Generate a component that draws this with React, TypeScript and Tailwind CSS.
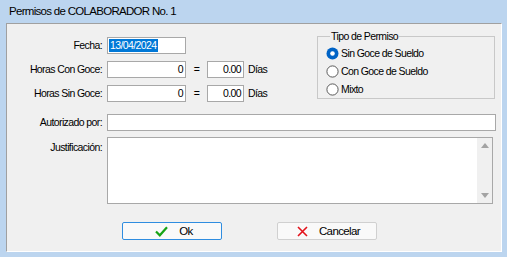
import React from 'react';

const font = { fontFamily: '"Liberation Sans", Arial, sans-serif' };

const TextBox: React.FC<{ width: string; value?: string; align?: 'left' | 'right' }> = ({ width, value, align }) => (
  <div
    className={`${width} h-[17px] bg-white border border-[#a8a8a8] flex items-center px-[2px] ${
      align === 'right' ? 'justify-end' : ''
    }`}
  >
    {value}
  </div>
);

const Radio: React.FC<{ checked?: boolean; label: string }> = ({ checked, label }) => (
  <div className="h-[18px] flex items-center gap-[2px]">
    <svg width="13" height="13" viewBox="0 0 13 13">
      {checked ? (
        <>
          <circle cx="6.5" cy="6.5" r="6" fill="#0063c6" />
          <circle cx="6.5" cy="6.5" r="2.3" fill="#ffffff" />
        </>
      ) : (
        <circle cx="6.5" cy="6.5" r="5.6" fill="#ffffff" stroke="#4a4a4a" strokeWidth="0.9" />
      )}
    </svg>
    <span>{label}</span>
  </div>
);

export default function App() {
  return (
    <div className="w-[507px] h-[257px] bg-[#bcd5ef] flex flex-col text-black" style={font}>
      <div className="h-[23px] pl-[9px] flex items-center text-[11.5px] tracking-[-0.7px]">Permisos de COLABORADOR No. 1</div>
      <div className="flex-1 ml-[6px] mr-[5px] mb-[5px] bg-[#f0f0f0] border-t border-l border-[#a0a0a0] border-r-white border-b-white border-r border-b text-[10.5px] leading-[13px] tracking-[-0.6px]">
        <div className="flex">
          <div className="w-[310px] pt-[13px] flex flex-col gap-[7px]">
            <div className="flex items-center">
              <div className="w-[95px] text-right">Fecha:</div>
              <div className="ml-[5px] w-[79px] h-[17px] bg-white border border-[#a8a8a8] flex items-center pl-[1px]">
                <span className="bg-[#0078d7] text-white px-[1px] leading-[13px]">13/04/2024</span>
              </div>
            </div>
            <div className="flex items-center">
              <div className="w-[95px] text-right">Horas Con Goce:</div>
              <div className="ml-[5px]">
                <TextBox width="w-[79px]" value="0" align="right" />
              </div>
              <span className="w-[21px] text-center">=</span>
              <TextBox width="w-[37px]" value="0.00" align="right" />
              <span className="ml-[4px]">Días</span>
            </div>
            <div className="flex items-center">
              <div className="w-[95px] text-right">Horas Sin Goce:</div>
              <div className="ml-[5px]">
                <TextBox width="w-[79px]" value="0" align="right" />
              </div>
              <span className="w-[21px] text-center">=</span>
              <TextBox width="w-[37px]" value="0.00" align="right" />
              <span className="ml-[4px]">Días</span>
            </div>
          </div>
          <fieldset className="mt-[6px] w-[178px] h-[69px] border border-[#c8c8c8] pl-[8px] pt-[1px]">
            <legend className="ml-[4px] px-[1px] leading-[13px]">Tipo de Permiso</legend>
            <Radio checked label="Sin Goce de Sueldo" />
            <Radio label="Con Goce de Sueldo" />
            <Radio label="Mixto" />
          </fieldset>
        </div>

        <div className="mt-[12px] flex items-center">
          <div className="w-[95px] text-right">Autorizado por:</div>
          <div className="ml-[5px]">
            <TextBox width="w-[389px]" />
          </div>
        </div>

        <div className="mt-[6px] flex items-start">
          <div className="w-[95px] text-right pt-[4px]">Justificación:</div>
          <div className="ml-[5px] w-[386px] h-[67px] bg-white border border-[#a8a8a8] flex">
            <div className="flex-1" />
            <div className="w-[15px] bg-[#f0f0f0] flex flex-col justify-between items-center py-[5px]">
              <svg width="8" height="5" viewBox="0 0 8 5">
                <path d="M0 5 L4 0 L8 5 Z" fill="#a3a3a3" />
              </svg>
              <svg width="8" height="5" viewBox="0 0 8 5">
                <path d="M0 0 L4 5 L8 0 Z" fill="#a3a3a3" />
              </svg>
            </div>
          </div>
        </div>

        <div className="mt-[18px] flex text-[11.5px]">
          <button className="ml-[115px] w-[100px] h-[18px] bg-[#f9f9f9] border border-[#2f8de0] rounded-[2px] flex items-center justify-center gap-[11px] pl-[4px]">
            <svg width="13" height="11" viewBox="0 0 13 11">
              <path d="M1 5.5 L4.8 9.3 L12 1.2" fill="none" stroke="#16a316" strokeWidth="2.2" />
            </svg>
            <span>Ok</span>
          </button>
          <button className="ml-[55px] w-[100px] h-[18px] bg-[#f9f9f9] border border-[#d0d0d0] rounded-[2px] flex items-center justify-center gap-[11px] pl-[3px]">
            <svg width="11" height="11" viewBox="0 0 11 11">
              <path d="M1 1 L10 10 M10 1 L1 10" fill="none" stroke="#e3121b" strokeWidth="1.6" />
            </svg>
            <span>Cancelar</span>
          </button>
        </div>
      </div>
    </div>
  );
}
